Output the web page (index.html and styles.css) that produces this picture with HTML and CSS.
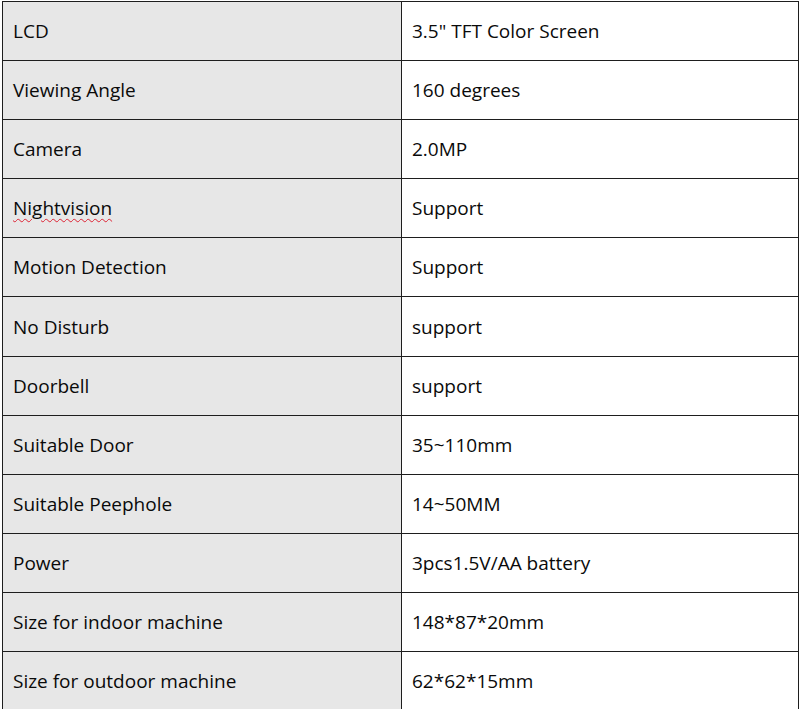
FILE: index.html
```html
<!DOCTYPE html>
<html>
<head>
<meta charset="utf-8">
<link rel="stylesheet" href="styles.css">
</head>
<body>
<table class="spec">
  <tr><td class="k">LCD</td><td class="v">3.5" TFT Color Screen</td></tr>
  <tr><td class="k">Viewing Angle</td><td class="v">160 degrees</td></tr>
  <tr><td class="k">Camera</td><td class="v">2.0MP</td></tr>
  <tr><td class="k"><span class="spell">Nightvision</span></td><td class="v">Support</td></tr>
  <tr><td class="k">Motion Detection</td><td class="v">Support</td></tr>
  <tr><td class="k">No Disturb</td><td class="v">support</td></tr>
  <tr><td class="k">Doorbell</td><td class="v">support</td></tr>
  <tr><td class="k">Suitable Door</td><td class="v">35~110mm</td></tr>
  <tr><td class="k">Suitable Peephole</td><td class="v">14~50MM</td></tr>
  <tr><td class="k">Power</td><td class="v">3pcs1.5V/AA battery</td></tr>
  <tr><td class="k">Size for indoor machine</td><td class="v">148*87*20mm</td></tr>
  <tr><td class="k">Size for outdoor machine</td><td class="v">62*62*15mm</td></tr>
</table>
</body>
</html>
```

FILE: styles.css
```css
html, body {
  margin: 0;
  padding: 0;
  background: #ffffff;
}
body {
  padding: 1px 0 0 2px;
  font-family: "Open Sans", "Noto Sans", sans-serif;
  font-size: 19px;
  color: #0a0a0a;
}
.spec {
  border-collapse: collapse;
  width: 797px;
  table-layout: fixed;
}
.spec td {
  height: 58px;
  padding: 0 0 0 10px;
  border: 1px solid #1e1e1e;
  vertical-align: middle;
  box-sizing: border-box;
}
.spec tr {
  height: 59.1px;
}
.spec td.k {
  width: 399px;
  background: #e7e7e7;
}
.spec td.v {
  background: #fff;
}
.spell {
  text-decoration: underline wavy #d23;
  text-decoration-thickness: 1px;
  text-underline-offset: 3px;
}
```
